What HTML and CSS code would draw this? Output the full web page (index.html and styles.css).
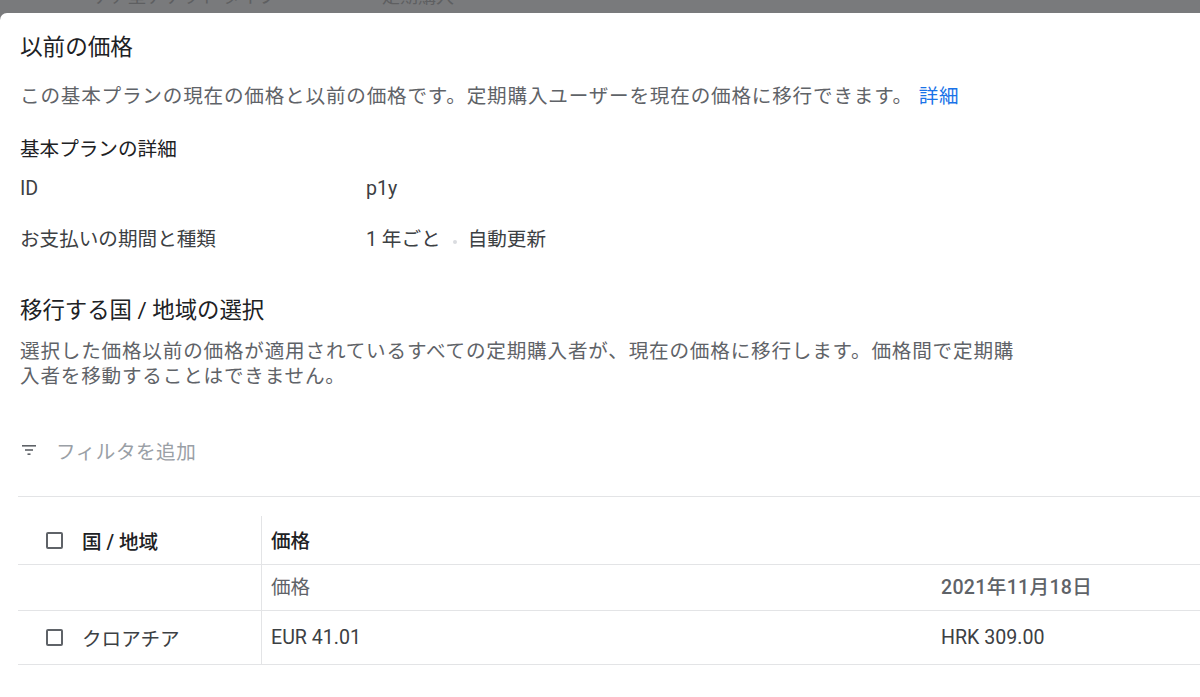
FILE: index.html
```html
<!DOCTYPE html>
<html lang="ja">
<head>
<meta charset="utf-8">
<link rel="stylesheet" href="styles.css">
</head>
<body>
<div class="backdrop">
  <span class="bd-a">ケア型チケット タイプ</span>
  <span class="bd-b">定期購入</span>
</div>
<div class="sheet">
  <h1 class="title">以前の価格</h1>
  <p class="intro">この基本プランの現在の価格と以前の価格です。定期購入ユーザーを現在の価格に移行できます。 <a class="link" href="#">詳細</a></p>

  <h2 class="sub">基本プランの詳細</h2>
  <div class="details">
    <div class="drow"><span class="dlabel">ID</span><span class="dval">p1y</span></div>
    <div class="drow"><span class="dlabel">お支払いの期間と種類</span><span class="dval">1 年ごと<span class="dot"></span>自動更新</span></div>
  </div>

  <h2 class="section">移行する国 / 地域の選択</h2>
  <p class="sdesc">選択した価格以前の価格が適用されているすべての定期購入者が、現在の価格に移行します。価格間で定期購入者を移動することはできません。</p>

  <div class="filter">
    <svg class="ficon" width="14" height="10" viewBox="0 0 14 10"><rect x="0" y="0" width="14" height="1.6" fill="#5f6368"/><rect x="3" y="4.2" width="8" height="1.6" fill="#5f6368"/><rect x="5.5" y="8.4" width="3" height="1.6" fill="#5f6368"/></svg>
    <span class="ftext">フィルタを追加</span>
  </div>

  <div class="table">
    <div class="trow thead">
      <div class="c1"><span class="cb"></span><span class="hlabel">国 / 地域</span></div>
      <div class="c2 c2head"><span class="hlabel2">価格</span></div>
    </div>
    <div class="trow tsub">
      <div class="c1"></div>
      <div class="c2"><span class="subl">価格</span></div>
      <div class="c3"><span class="date">2021年11月18日</span></div>
    </div>
    <div class="trow tdata">
      <div class="c1"><span class="cb"></span><span class="country">クロアチア</span></div>
      <div class="c2"><span class="val">EUR 41.01</span></div>
      <div class="c3"><span class="val">HRK 309.00</span></div>
    </div>
  </div>
</div>
</body>
</html>
```

FILE: styles.css
```css
* { box-sizing: border-box; }
html, body { margin: 0; padding: 0; }
body {
  background: #797a7c;
  font-family: Roboto, "Noto Sans CJK JP", sans-serif;
  width: 1200px;
  height: 697px;
  overflow: hidden;
}
.backdrop {
  height: 13px;
  overflow: hidden;
  position: relative;
  color: #5e5f61;
  font-size: 18px;
  line-height: 18px;
  white-space: nowrap;
}
.bd-a { position: absolute; left: 92px; top: -12px; }
.bd-b { position: absolute; left: 382px; top: -12px; }
.sheet {
  background: #fff;
  height: 684px;
  border-radius: 7px 0 0 0;
  padding: 0 0 0 20px;
  overflow: hidden;
}
.title {
  margin: 0;
  padding-top: 19px;
  font-size: 22.6px;
  line-height: 32px;
  font-weight: 400;
  color: #202124;
}
.intro {
  margin: 19px 0 0;
  font-size: 19.6px;
  line-height: 28px;
  letter-spacing: 0.8px;
  color: #5f6368;
}
.link { color: #1a73e8; text-decoration: none; }
.sub {
  margin: 25px 0 0;
  font-size: 19.6px;
  line-height: 28px;
  font-weight: 400;
  color: #202124;
}
.details { margin-top: 11px; display: flex; flex-direction: column; gap: 23px; }
.drow {
  display: flex;
  font-size: 19.6px;
  line-height: 28px;
  color: #3c4043;
}
.dlabel { width: 346px; }
.dval { display: flex; align-items: center; }
.dot {
  width: 4px; height: 4px; border-radius: 50%;
  background: #dadce0;
  margin: 4px 11px 0 12px;
}
.section {
  margin: 40px 0 0;
  font-size: 22.4px;
  line-height: 32px;
  font-weight: 400;
  color: #202124;
}
.sdesc {
  margin: 13px 0 0;
  width: 1010px;
  font-size: 19.6px;
  line-height: 25px;
  letter-spacing: 0.8px;
  color: #5f6368;
}
.filter {
  margin-top: 47px;
  display: flex;
  align-items: center;
  height: 28px;
}
.ficon { margin-left: 2px; margin-right: 20px; }
.ftext { font-size: 19.6px; color: #9aa0a6; letter-spacing: 0.5px; }
.table {
  margin: 32px 0 0 -2px;
  border-top: 1.5px solid #e3e4e6;
}
.trow {
  display: flex;
  border-bottom: 1.5px solid #e3e4e6;
  font-size: 19.6px;
  color: #3c4043;
}
.c1 {
  width: 243px;
  flex: none;
  display: flex;
  align-items: center;
  padding-left: 28px;
}
.c2 {
  width: 670px;
  flex: none;
  display: flex;
  align-items: center;
  padding-left: 9px;
  border-left: 1.5px solid #e3e4e6;
}
.c3 {
  flex: 1;
  display: flex;
  align-items: center;
  padding-left: 10px;
}
.thead { height: 67.5px; }
.thead .c1 { padding-top: 20px; }
.thead .c2 { margin-top: 19px; padding-top: 0; }
.tsub { height: 46px; }
.tsub .c2, .tsub .c3 { padding-bottom: 3px; }
.tdata { height: 54px; }
.cb {
  width: 17px; height: 17px;
  border: 2px solid #5f6368;
  border-radius: 2px;
  margin-right: 19px;
  flex: none;
}
.hlabel, .hlabel2 { font-weight: 500; color: #202124; }
.subl { color: #5f6368; }
.date { font-weight: 500; color: #5f6368; letter-spacing: 0.3px; }
.country { color: #3c4043; }
.val { color: #3c4043; }
```
